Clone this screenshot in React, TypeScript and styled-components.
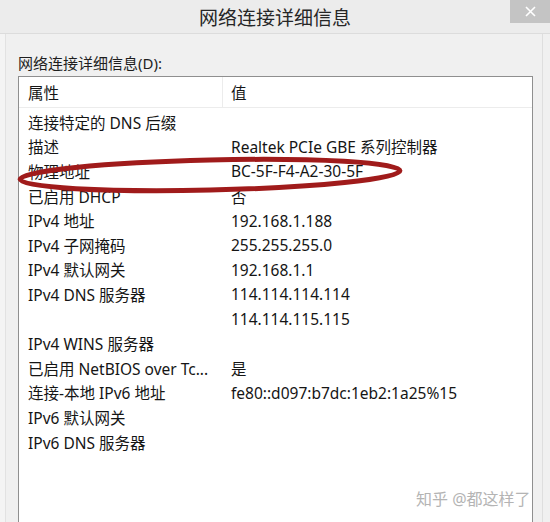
import styled, { createGlobalStyle } from 'styled-components';

const GlobalStyle = createGlobalStyle`
  html, body {
    margin: 0;
    padding: 0;
    background: #f0f0f0;
  }
  body {
    font-family: "Noto Sans", "Noto Sans CJK SC", sans-serif;
    color: #151515;
  }
`;

const rows: [string, string][] = [
  ['连接特定的 DNS 后缀', ''],
  ['描述', 'Realtek PCIe GBE 系列控制器'],
  ['物理地址', 'BC-5F-F4-A2-30-5F'],
  ['已启用 DHCP', '否'],
  ['IPv4 地址', '192.168.1.188'],
  ['IPv4 子网掩码', '255.255.255.0'],
  ['IPv4 默认网关', '192.168.1.1'],
  ['IPv4 DNS 服务器', '114.114.114.114'],
  ['', '114.114.115.115'],
  ['IPv4 WINS 服务器', ''],
  ['已启用 NetBIOS over Tc...', '是'],
  ['连接-本地 IPv6 地址', 'fe80::d097:b7dc:1eb2:1a25%15'],
  ['IPv6 默认网关', ''],
  ['IPv6 DNS 服务器', ''],
];

const Window = styled.div`
  width: 550px;
  height: 522px;
  overflow: hidden;
  display: flex;
  flex-direction: column;
  background: #f0f0f0;
  box-shadow: inset 5px 0 0 #f4f4f4, inset 6px 0 0 #e2e2e2;
`;

const TitleBar = styled.div`
  height: 33px;
  flex-shrink: 0;
  display: grid;
  grid-template-columns: 1fr auto 1fr;
  align-items: center;
  background: #ececec;
  border-bottom: 1px solid #dcdcdc;
`;

const Title = styled.div`
  grid-column: 2;
  font-size: 19px;
  color: #262626;
  padding-top: 1px;
`;

const CloseButton = styled.div`
  grid-column: 3;
  justify-self: end;
  align-self: start;
  width: 40px;
  height: 23px;
  background: #c4c4c4;
  display: flex;
  align-items: center;
  justify-content: center;
`;

const Body = styled.div`
  flex: 1;
  display: flex;
  flex-direction: column;
  padding: 20px 17px 0 18px;
  min-height: 0;
  box-shadow: inset -7px 0 0 #f0f0f0, inset -8px 0 0 #dedede;
`;

const Label = styled.div`
  font-size: 15px;
  line-height: 18px;
  margin-bottom: 4px;
  color: #1e1e1e;
`;

const ListBox = styled.div`
  position: relative;
  flex: 1;
  background: #ffffff;
  border: 1px solid #8f8f8f;
  border-bottom: none;
`;

const Grid = styled.div`
  display: grid;
  grid-template-columns: 204px 1fr;
`;

const HeaderRow = styled(Grid)`
  height: 30px;
  align-items: stretch;
  border-bottom: 1px solid #ececec;
  margin-bottom: 2px;
`;

const HeaderCell = styled.div<{ $first?: boolean }>`
  display: flex;
  align-items: center;
  padding-left: ${(p) => (p.$first ? '9px' : '8px')};
  font-size: 15.5px;
  border-right: ${(p) => (p.$first ? '1px solid #ececec' : 'none')};
`;

const Row = styled(Grid)`
  height: 24.6px;
  align-items: center;
`;

const Cell = styled.div<{ $first?: boolean }>`
  padding-left: ${(p) => (p.$first ? '9px' : '8px')};
  font-size: 15.5px;
  white-space: nowrap;
  overflow: hidden;
`;

const Ellipse = styled.svg`
  position: absolute;
  left: -6px;
  top: 79px;
  pointer-events: none;
`;

const Watermark = styled.div`
  position: absolute;
  right: 0;
  bottom: 12px;
  width: 116px;
  overflow: hidden;
  white-space: nowrap;
  font-size: 16px;
  color: #b4b4b4;
  text-shadow: 0 0 2px #ffffff;
`;

export default function App() {
  return (
    <>
      <GlobalStyle />
      <Window>
        <TitleBar>
          <Title>网络连接详细信息</Title>
          <CloseButton>
            <svg width="11" height="11" viewBox="0 0 11 11">
              <path d="M1 1 L10 10 M10 1 L1 10" stroke="#ffffff" strokeWidth="1.6" />
            </svg>
          </CloseButton>
        </TitleBar>
        <Body>
          <Label>网络连接详细信息(D):</Label>
          <ListBox>
            <HeaderRow>
              <HeaderCell $first>属性</HeaderCell>
              <HeaderCell>值</HeaderCell>
            </HeaderRow>
            {rows.map(([k, v], i) => (
              <Row key={i}>
                <Cell $first>{k}</Cell>
                <Cell>{v}</Cell>
              </Row>
            ))}
            <Ellipse width="396" height="40" viewBox="0 0 396 40">
              <ellipse
                cx="197"
                cy="19"
                rx="190"
                ry="15"
                fill="none"
                stroke="#a01b1b"
                strokeWidth="5"
                transform="rotate(-1.3 197 19)"
              />
            </Ellipse>
            <Watermark>知乎 @都这样了</Watermark>
          </ListBox>
        </Body>
      </Window>
    </>
  );
}
